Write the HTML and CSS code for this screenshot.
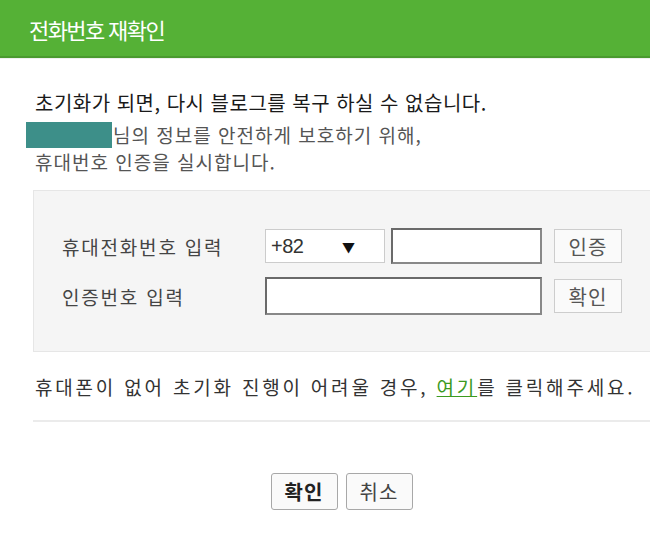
FILE: index.html
```html
<!DOCTYPE html>
<html lang="ko">
<head>
<meta charset="utf-8">
<link rel="stylesheet" href="styles.css">
</head>
<body>
<div class="header"><h1 class="title">전화번호 재확인</h1></div>
<div class="content">
  <p class="lead">초기화가 되면, 다시 블로그를 복구 하실 수 없습니다.</p>
  <p class="info"><span class="masked"></span>님의 정보를 안전하게 보호하기 위해,<br>휴대번호 인증을 실시합니다.</p>
  <div class="panel">
    <div class="row">
      <span class="label">휴대전화번호 입력</span>
      <div class="select"><span class="code">+82</span><span class="arrow">▼</span></div>
      <div class="input short"></div>
      <button class="btn">인증</button>
    </div>
    <div class="row">
      <span class="label">인증번호 입력</span>
      <div class="input long"></div>
      <button class="btn">확인</button>
    </div>
  </div>
  <p class="help">휴대폰이 없어 초기화 진행이 어려울 경우, <a class="link" href="#">여기</a>를 클릭해주세요.</p>
  <div class="divider"></div>
  <div class="actions">
    <button class="action primary">확인</button>
    <button class="action">취소</button>
  </div>
</div>
</body>
</html>
```

FILE: styles.css
```css
* { box-sizing: border-box; }
html, body { margin: 0; padding: 0; background: #fff; overflow: hidden; }
body {
  font-family: "Noto Sans CJK KR", "Noto Sans", sans-serif;
  color: #333;
  width: 650px;
}
.header {
  height: 58px;
  background: #55b136;
  border-bottom: 2px solid #4a9a2f;
  display: flex;
  align-items: center;
  padding-left: 29px;
  box-shadow: 0 1px 0 #eef0ee;
}
.title {
  margin: 0;
  font-size: 22px;
  font-weight: 400;
  color: #fff;
  letter-spacing: -1.6px;
  line-height: 1;
  padding-top: 2px;
}
.content {
  padding-left: 33px;
}
.lead {
  margin: 31px 0 0 2px;
  font-size: 20px;
  line-height: 28px;
  color: #1a1a1a;
  letter-spacing: 0.5px;
  white-space: nowrap;
}
.info {
  margin: 4px 0 0 2px;
  font-size: 19px;
  line-height: 27px;
  color: #555;
  letter-spacing: 1px;
  white-space: nowrap;
}
.masked {
  display: inline-block;
  width: 86px;
  height: 26px;
  background: #3d8f89;
  vertical-align: -5px;
  margin-left: -9px;
  margin-right: 1px;
}
.panel {
  margin-top: 15px;
  width: 640px;
  height: 162px;
  background: #f5f5f5;
  border: 1px solid #e6e6e6;
  border-right: none;
  padding: 37px 0 0 28px;
  display: flex;
  flex-direction: column;
  gap: 13px;
}
.row {
  display: flex;
  align-items: center;
}
.label {
  width: 203px;
  font-size: 19px;
  color: #444;
  letter-spacing: 1.8px;
  white-space: nowrap;
}
.select {
  width: 120px;
  height: 34px;
  background: #fff;
  border: 1px solid #ccc;
  display: flex;
  align-items: center;
  padding: 0 0 0 5px;
  color: #333;
  margin-right: 6px;
}
.code {
  font-family: "Liberation Sans", Arial, sans-serif;
  font-size: 20px;
  width: 71px;
  letter-spacing: -0.5px;
}
.arrow { font-size: 13px; color: #111; }
.input {
  background: #fff;
  border: 2px solid #6a6a6a;
  border-right-color: #888;
  border-bottom-color: #888;
}
.input.short { width: 151px; height: 36px; }
.input.long { width: 277px; height: 38px; }
.btn {
  margin-left: 12px;
  width: 68px;
  height: 34px;
  background: #fafafa;
  border: 1px solid #cdcdcd;
  font-family: "Noto Sans CJK KR", sans-serif;
  font-size: 20px;
  color: #555;
  padding: 0;
  letter-spacing: 1px;
}
.help {
  margin: 22px 0 0 2px;
  font-size: 19px;
  line-height: 26px;
  color: #333;
  letter-spacing: 2.8px;
  white-space: nowrap;
}
.link { color: #3c9a1f; text-decoration: underline; }
.divider {
  margin-top: 20px;
  height: 2px;
  background: #ebebeb;
  width: 620px;
}
.actions {
  margin-top: 51px;
  display: flex;
  justify-content: center;
  gap: 8px;
}
.action {
  width: 67px;
  height: 37px;
  background: #fafafa;
  border: 1px solid #a8a8a8;
  border-radius: 3px;
  font-family: "Noto Sans CJK KR", sans-serif;
  font-size: 20px;
  color: #444;
  padding: 0;
  letter-spacing: 1px;
}
.action.primary { font-weight: 700; color: #222; }
```
